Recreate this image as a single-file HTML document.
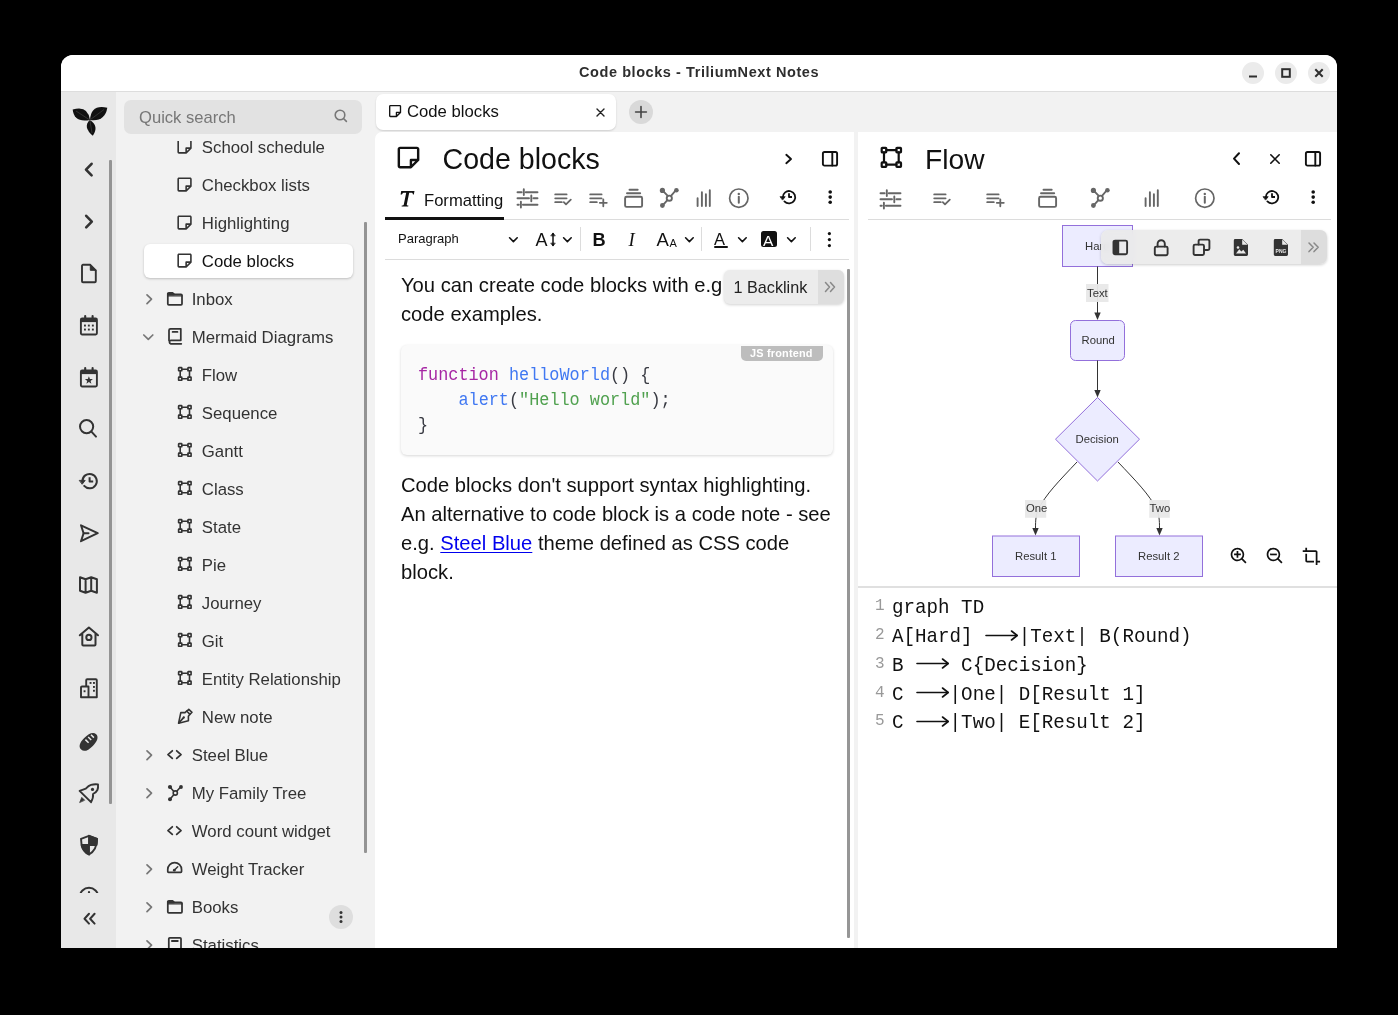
<!DOCTYPE html>
<html><head><meta charset="utf-8">
<style>
*{box-sizing:border-box;margin:0;padding:0}
html,body{width:1398px;height:1015px;background:#000;overflow:hidden;font-family:"Liberation Sans",sans-serif;color:#222}
.a{position:absolute;overflow:visible}
.b{position:absolute}
.tx{position:absolute;white-space:nowrap;line-height:1}
.row{position:absolute;white-space:nowrap;font-size:16.8px;color:#333;line-height:38px;height:38px}
.mono{font-family:"Liberation Mono",monospace}

</style></head><body>
<div id="root" style="position:absolute;left:0;top:0;width:1398px;height:1015px;will-change:transform">

<div class="b" style="left:61px;top:55px;width:1276px;height:893px;background:#f2f2f2;border-radius:12px 12px 0 0;overflow:hidden">
  <div class="b" style="left:0;top:0;width:1276px;height:36px;background:#fff"></div>
  <div class="b" style="left:0;top:36px;width:1276px;height:1px;background:#dddddd"></div>
  <div class="b" style="left:0;top:37px;width:55px;height:856px;background:#e8e8e8"></div>
</div>
<div class="tx" style="left:579px;top:65px;font-weight:bold;font-size:14.5px;letter-spacing:0.57px;color:#2e2e2e">Code blocks - TriliumNext Notes</div>
<div class="b" style="left:1242px;top:62px;width:22px;height:22px;border-radius:50%;background:#ebebeb"></div>
<div class="b" style="left:1275px;top:62px;width:22px;height:22px;border-radius:50%;background:#ebebeb"></div>
<div class="b" style="left:1308px;top:62px;width:22px;height:22px;border-radius:50%;background:#ebebeb"></div>
<svg class="a" style="left:1242px;top:62px" width="22" height="22" viewBox="0 0 22 22" stroke="#2e2e2e" stroke-width="2" fill="none"><path d="M7 14.5h8"/></svg>
<svg class="a" style="left:1275px;top:62px" width="22" height="22" viewBox="0 0 22 22" stroke="#2e2e2e" stroke-width="2" fill="none"><rect x="7.2" y="7.2" width="7.6" height="7.6"/></svg>
<svg class="a" style="left:1308px;top:62px" width="22" height="22" viewBox="0 0 22 22" stroke="#2e2e2e" stroke-width="2" fill="none"><path d="M7.3 7.3l7.4 7.4M14.7 7.3l-7.4 7.4"/></svg>
<svg class="a" style="left:70px;top:104px" width="40" height="35" viewBox="70 104 40 35"><g fill="#111">
<path d="M72.7 109.5 Q74 123 90 120 Q88 105 72.7 109.5Z"/>
<path d="M107.3 107.8 Q91 104 90 120 Q105 122 107.3 107.8Z"/>
<path d="M92.8 135.8 Q99.5 126 89.8 120 Q82.5 127 92.8 135.8Z"/>
</g><g stroke="#555" stroke-width="0.5" fill="none"><path d="M76 111 L89 119.5 M104 109.5 L90.5 119.5 M90 121 L92 133"/></g></svg>
<svg class="a" style="left:83px;top:162px" width="11" height="15" viewBox="0 0 11 15" fill="none" stroke="#333" stroke-width="2.6" stroke-linejoin="round" stroke-linecap="round" stroke-linecap="butt" stroke-linejoin="miter"><path d="M8.6 1.8 L3 7.6 L8.6 13.4"/></svg>
<svg class="a" style="left:84px;top:214px" width="11" height="15" viewBox="0 0 11 15" fill="none" stroke="#333" stroke-width="2.6" stroke-linejoin="round" stroke-linecap="round" stroke-linecap="butt" stroke-linejoin="miter"><path d="M2.2 1.8 L7.8 7.6 L2.2 13.4"/></svg>
<svg class="a" style="left:80px;top:263px" width="18" height="21" viewBox="0 0 18 21" fill="none" stroke="#333" stroke-width="1.9" stroke-linejoin="round" stroke-linecap="round" ><path d="M3 1.8 H10.3 L15.8 7.3 V18.3 a1 1 0 0 1 -1 1 H3 a1 1 0 0 1 -1 -1 V2.8 a1 1 0 0 1 1 -1 Z"/><path d="M10.3 1.8 V7.3 H15.8" fill="#333" stroke-width="1"/></svg>
<svg class="a" style="left:79px;top:315px" width="20" height="21" viewBox="0 0 20 21" fill="none" stroke="#333" stroke-width="1.9" stroke-linejoin="round" stroke-linecap="round" ><rect x="1.9" y="3.5" width="16" height="16" rx="1.2"/><rect x="1.9" y="3.5" width="16" height="3.6" fill="#333" stroke="none"/><path d="M6.2 1 V4 M13.6 1 V4" stroke-width="2.1"/><rect x="5" y="9.6" width="1.9" height="1.9" fill="#333" stroke="none"/><rect x="5" y="13.6" width="1.9" height="1.9" fill="#333" stroke="none"/><rect x="8.9" y="9.6" width="1.9" height="1.9" fill="#333" stroke="none"/><rect x="8.9" y="13.6" width="1.9" height="1.9" fill="#333" stroke="none"/><rect x="12.9" y="9.6" width="1.9" height="1.9" fill="#333" stroke="none"/><rect x="12.9" y="13.6" width="1.9" height="1.9" fill="#333" stroke="none"/></svg>
<svg class="a" style="left:79px;top:367px" width="20" height="21" viewBox="0 0 20 21" fill="none" stroke="#333" stroke-width="1.9" stroke-linejoin="round" stroke-linecap="round" ><rect x="1.9" y="3.5" width="16" height="16" rx="1.2"/><rect x="1.9" y="3.5" width="16" height="3.6" fill="#333" stroke="none"/><path d="M6.2 1 V4 M13.6 1 V4" stroke-width="2.1"/><path d="M9.9 9.2 L10.95 12 L13.9 12.1 L11.6 13.9 L12.4 16.7 L9.9 15.1 L7.4 16.7 L8.2 13.9 L5.9 12.1 L8.85 12 Z" fill="#333" stroke="none"/></svg>
<svg class="a" style="left:78px;top:418px" width="20" height="21" viewBox="0 0 20 21" fill="none" stroke="#333" stroke-width="2" stroke-linejoin="round" stroke-linecap="round" ><circle cx="8.6" cy="8.6" r="6.6"/><path d="M13.4 13.6 L18 18.6"/></svg>
<svg class="a" style="left:78px;top:471px" width="22" height="21" viewBox="0 0 22 21" fill="none" stroke="#333" stroke-width="2" stroke-linejoin="round" stroke-linecap="round" ><path d="M4.4 10.2 A7.2 7.2 0 1 1 6.2 14.9"/><path d="M1.6 9.4 L7.2 9.4 L4.4 13 Z" fill="#333" stroke-width="0.9"/><path d="M11.6 6.3 V10.6 H15.2" stroke-linecap="butt"/></svg>
<svg class="a" style="left:79px;top:523px" width="21" height="21" viewBox="0 0 21 21" fill="none" stroke="#333" stroke-width="2" stroke-linejoin="round" stroke-linecap="round" ><path d="M2 2.3 L18.7 10.2 L2 18.2 L4.6 10.2 Z"/><path d="M4.6 10.2 H9.5"/></svg>
<svg class="a" style="left:78px;top:575px" width="22" height="21" viewBox="0 0 22 21" fill="none" stroke="#333" stroke-width="2" stroke-linejoin="round" stroke-linecap="round" ><path d="M2 2.3 L7.6 4.3 L13.2 2.3 L18.9 4.3 V17.8 L13.2 15.8 L7.6 17.8 L2 15.8 Z M7.6 4.3 V17.8 M13.2 2.3 V15.8"/></svg>
<svg class="a" style="left:78px;top:625px" width="22" height="23" viewBox="0 0 22 23" fill="none" stroke="#333" stroke-width="2" stroke-linejoin="round" stroke-linecap="round" ><path d="M1.8 10.3 L10.9 2.5 L20 10.3 M4.3 8.5 V19.6 a1 1 0 0 0 1 1 H16.5 a1 1 0 0 0 1 -1 V8.5"/><circle cx="10.9" cy="12.4" r="2.6"/></svg>
<svg class="a" style="left:79px;top:677px" width="20" height="23" viewBox="0 0 20 23" fill="none" stroke="#333" stroke-width="1.9" stroke-linejoin="round" stroke-linecap="round" ><path d="M7.2 9.5 V3.2 a1 1 0 0 1 1 -1 H16.8 a1 1 0 0 1 1 1 V20.2 H2 V10.5 a1 1 0 0 1 1 -1 H9.5 V20.2"/><rect x="10.6" y="5" width="1.9" height="1.9" fill="#333" stroke="none"/><rect x="14" y="5" width="1.9" height="1.9" fill="#333" stroke="none"/><rect x="14" y="9" width="1.9" height="1.9" fill="#333" stroke="none"/><rect x="14" y="12.8" width="1.9" height="1.9" fill="#333" stroke="none"/><rect x="4.6" y="13.3" width="1.9" height="1.9" fill="#333" stroke="none"/></svg>
<svg class="a" style="left:77px;top:730px" width="23" height="23" viewBox="0 0 23 23" fill="none" stroke="#333" stroke-width="2" stroke-linejoin="round" stroke-linecap="round" ><path d="M4.2 19.6 C1.2 16.8 2.6 12.6 7.2 8 C11.8 3.4 16.2 1.6 19.2 4.2 C21.9 7 20.4 11.3 15.8 15.9 C11.2 20.5 7 22.3 4.2 19.6 Z" fill="#333" stroke="none"/><path d="M8.4 9.6 L11.6 12.8 M11.2 7 L14.2 10 M14 4.7 L16.9 7.6" stroke="#e8e8e8" stroke-width="1.5" stroke-linecap="butt"/></svg>
<svg class="a" style="left:78px;top:782px" width="22" height="22" viewBox="0 0 22 22" fill="none" stroke="#333" stroke-width="1.9" stroke-linejoin="round" stroke-linecap="round" ><path d="M1.6 8.8 L7.8 6.6 C9.5 4.7 11 3.3 13 2.8 C15.5 2.2 18 2.2 20 2.4 C20.2 4.4 20.2 6.4 19.4 8 C18.6 9.6 16.6 11.2 15 12 C15.4 14.6 14.8 17 13 20.2 Z"/><circle cx="14.5" cy="7.4" r="1.6" fill="#333" stroke="none"/><path d="M1.8 20.2 L3.8 15.4 L6.4 18 Z" fill="#333" stroke-width="0.8"/></svg>
<svg class="a" style="left:79px;top:834px" width="20" height="23" viewBox="0 0 20 23" fill="none" stroke="#333" stroke-width="1.9" stroke-linejoin="round" stroke-linecap="round" ><path d="M10 1.8 L18 4.8 C18 12.5 15.5 17.5 10 20.5 C4.5 17.5 2 12.5 2 4.8 Z"/><path d="M10 1.8 L18 4.8 C18 7.5 17.8 9.2 17.5 11 H10 Z M10 11 H2.5 C3.3 15.3 5.5 18.3 10 20.5 Z" fill="#333"/></svg>
<div class="b" style="left:70px;top:880px;width:40px;height:13px;overflow:hidden"><svg class="a" style="left:8px;top:5px" width="22" height="20" viewBox="0 0 22 20" fill="none" stroke="#333" stroke-width="2"><path d="M1.8 12 A9.2 9.2 0 0 1 20.2 12"/><circle cx="11" cy="7.2" r="1.1" fill="#333" stroke="none"/></svg></div>
<svg class="a" style="left:82px;top:911.6px" width="15" height="14" viewBox="0 0 15 14" fill="none" stroke="#333" stroke-width="2" stroke-linejoin="round" stroke-linecap="round" stroke-linecap="butt" stroke-linejoin="miter"><path d="M7 1.8 L2.5 6.7 L7 11.6 M12.6 1.8 L8.1 6.7 L12.6 11.6"/></svg>
<div class="b" style="left:109px;top:160px;width:3px;height:644px;background:#949494;border-radius:1px"></div><div class="b" style="left:116px;top:92px;width:259px;height:856px;background:#f2f2f2"></div>
<div class="b" style="left:124px;top:100px;width:238px;height:34px;border-radius:7px;background:#e2e2e2"></div>
<div class="tx" style="left:139px;top:110px;font-size:16.6px;color:#777">Quick search</div>
<svg class="a" style="left:333px;top:108px" width="16" height="16" viewBox="0 0 16 16" fill="none" stroke="#777" stroke-width="1.6" stroke-linejoin="round" stroke-linecap="round" ><circle cx="7" cy="7" r="4.8"/><path d="M10.5 10.5 L13.4 13.4"/></svg>
<div class="b" style="left:116px;top:141px;width:259px;height:807px;overflow:hidden">
<div class="row" style="left:85.80000000000001px;top:-11.7px;color:#333">School schedule</div>
<svg class="a" style="left:59.1px;top:-4.4px" width="19.1" height="19.1" viewBox="0 0 24 24" fill="#333"><path d="M19 3H5c-1.103 0-2 .897-2 2v14c0 1.103.897 2 2 2h9a1 1 0 0 0 .707-.293l6-6a1 1 0 0 0 .293-.707V5c0-1.103-.897-2-2-2zM5 5h14v8h-5a1 1 0 0 0-1 1v5H5V5zm10 12.586V15h2.586L15 17.586z"/></svg>
<div class="row" style="left:85.80000000000001px;top:26.3px;color:#333">Checkbox lists</div>
<svg class="a" style="left:59.1px;top:33.6px" width="19.1" height="19.1" viewBox="0 0 24 24" fill="#333"><path d="M19 3H5c-1.103 0-2 .897-2 2v14c0 1.103.897 2 2 2h9a1 1 0 0 0 .707-.293l6-6a1 1 0 0 0 .293-.707V5c0-1.103-.897-2-2-2zM5 5h14v8h-5a1 1 0 0 0-1 1v5H5V5zm10 12.586V15h2.586L15 17.586z"/></svg>
<div class="row" style="left:85.80000000000001px;top:64.3px;color:#333">Highlighting</div>
<svg class="a" style="left:59.1px;top:71.6px" width="19.1" height="19.1" viewBox="0 0 24 24" fill="#333"><path d="M19 3H5c-1.103 0-2 .897-2 2v14c0 1.103.897 2 2 2h9a1 1 0 0 0 .707-.293l6-6a1 1 0 0 0 .293-.707V5c0-1.103-.897-2-2-2zM5 5h14v8h-5a1 1 0 0 0-1 1v5H5V5zm10 12.586V15h2.586L15 17.586z"/></svg>
<div class="b" style="left:28px;top:103px;width:208.5px;height:34.2px;background:#fff;border-radius:6px;box-shadow:0 1px 2.5px rgba(0,0,0,.22)"></div>
<div class="row" style="left:85.80000000000001px;top:102.3px;color:#111">Code blocks</div>
<svg class="a" style="left:59.1px;top:109.6px" width="19.1" height="19.1" viewBox="0 0 24 24" fill="#333"><path d="M19 3H5c-1.103 0-2 .897-2 2v14c0 1.103.897 2 2 2h9a1 1 0 0 0 .707-.293l6-6a1 1 0 0 0 .293-.707V5c0-1.103-.897-2-2-2zM5 5h14v8h-5a1 1 0 0 0-1 1v5H5V5zm10 12.586V15h2.586L15 17.586z"/></svg>
<div class="row" style="left:75.69999999999999px;top:140.3px;color:#333">Inbox</div>
<svg class="a" style="left:49.7px;top:150px" width="18" height="16" viewBox="0 0 18 16" fill="none" stroke="#333" stroke-width="1.75" stroke-linejoin="round" stroke-linecap="round" ><path d="M1.8 12.8 V2.8 a1 1 0 0 1 1 -1 H6.6 L8.2 3.3 H15 a1 1 0 0 1 1 1 V12.8 a1 1 0 0 1 -1 1 H2.8 a1 1 0 0 1 -1 -1 Z"/><path d="M2.5 3.2 H7.4" stroke-width="2.4"/><path d="M1.8 4.8 H16" stroke-width="1.2"/></svg>
<svg class="a" style="left:28.69999999999999px;top:152.3px" width="9" height="13" viewBox="0 0 9 13" fill="none" stroke="#777" stroke-width="1.7" stroke-linejoin="round" stroke-linecap="round" stroke-linecap="butt" stroke-linejoin="miter"><path d="M2 1.8 L6.5 6.2 L2 10.6"/></svg>
<div class="row" style="left:75.69999999999999px;top:178.3px;color:#333">Mermaid Diagrams</div>
<svg class="a" style="left:50.6px;top:185.7px" width="17" height="18" viewBox="0 0 17 18" fill="none" stroke="#333" stroke-width="1.75" stroke-linejoin="round" stroke-linecap="round" ><path d="M2 13.6 V3.3 a1.5 1.5 0 0 1 1.5 -1.5 H13.8 V13.3 H3.8 a1.8 1.8 0 0 0 0 3.5 H14.3"/><path d="M5.6 4.9 H10.5" stroke-width="1.7"/></svg>
<svg class="a" style="left:25.599999999999994px;top:192.10000000000002px" width="13" height="9" viewBox="0 0 13 9" fill="none" stroke="#777" stroke-width="1.7" stroke-linejoin="round" stroke-linecap="round" stroke-linecap="butt" stroke-linejoin="miter"><path d="M1.8 2 L6.3 6.4 L10.8 2"/></svg>
<div class="row" style="left:85.80000000000001px;top:216.3px;color:#333">Flow</div>
<svg class="a" style="left:60.9px;top:225.3px" width="17" height="17" viewBox="0 0 17 17" fill="none" stroke="#333" stroke-width="1.6" stroke-linejoin="round" stroke-linecap="round" ><rect x="1.6" y="1.6" width="3.2" height="3.2" rx="0.4"/><rect x="1.6" y="11.1" width="3.2" height="3.2" rx="0.4"/><rect x="10.9" y="1.6" width="3.2" height="3.2" rx="0.4"/><rect x="10.9" y="11.1" width="3.2" height="3.2" rx="0.4"/><path d="M4.8 3.2 H10.9 M4.8 12.7 H10.9 M3.2 4.8 V11.1 M12.5 4.8 V11.1"/></svg>
<div class="row" style="left:85.80000000000001px;top:254.3px;color:#333">Sequence</div>
<svg class="a" style="left:60.9px;top:263.3px" width="17" height="17" viewBox="0 0 17 17" fill="none" stroke="#333" stroke-width="1.6" stroke-linejoin="round" stroke-linecap="round" ><rect x="1.6" y="1.6" width="3.2" height="3.2" rx="0.4"/><rect x="1.6" y="11.1" width="3.2" height="3.2" rx="0.4"/><rect x="10.9" y="1.6" width="3.2" height="3.2" rx="0.4"/><rect x="10.9" y="11.1" width="3.2" height="3.2" rx="0.4"/><path d="M4.8 3.2 H10.9 M4.8 12.7 H10.9 M3.2 4.8 V11.1 M12.5 4.8 V11.1"/></svg>
<div class="row" style="left:85.80000000000001px;top:292.3px;color:#333">Gantt</div>
<svg class="a" style="left:60.9px;top:301.3px" width="17" height="17" viewBox="0 0 17 17" fill="none" stroke="#333" stroke-width="1.6" stroke-linejoin="round" stroke-linecap="round" ><rect x="1.6" y="1.6" width="3.2" height="3.2" rx="0.4"/><rect x="1.6" y="11.1" width="3.2" height="3.2" rx="0.4"/><rect x="10.9" y="1.6" width="3.2" height="3.2" rx="0.4"/><rect x="10.9" y="11.1" width="3.2" height="3.2" rx="0.4"/><path d="M4.8 3.2 H10.9 M4.8 12.7 H10.9 M3.2 4.8 V11.1 M12.5 4.8 V11.1"/></svg>
<div class="row" style="left:85.80000000000001px;top:330.3px;color:#333">Class</div>
<svg class="a" style="left:60.9px;top:339.3px" width="17" height="17" viewBox="0 0 17 17" fill="none" stroke="#333" stroke-width="1.6" stroke-linejoin="round" stroke-linecap="round" ><rect x="1.6" y="1.6" width="3.2" height="3.2" rx="0.4"/><rect x="1.6" y="11.1" width="3.2" height="3.2" rx="0.4"/><rect x="10.9" y="1.6" width="3.2" height="3.2" rx="0.4"/><rect x="10.9" y="11.1" width="3.2" height="3.2" rx="0.4"/><path d="M4.8 3.2 H10.9 M4.8 12.7 H10.9 M3.2 4.8 V11.1 M12.5 4.8 V11.1"/></svg>
<div class="row" style="left:85.80000000000001px;top:368.3px;color:#333">State</div>
<svg class="a" style="left:60.9px;top:377.3px" width="17" height="17" viewBox="0 0 17 17" fill="none" stroke="#333" stroke-width="1.6" stroke-linejoin="round" stroke-linecap="round" ><rect x="1.6" y="1.6" width="3.2" height="3.2" rx="0.4"/><rect x="1.6" y="11.1" width="3.2" height="3.2" rx="0.4"/><rect x="10.9" y="1.6" width="3.2" height="3.2" rx="0.4"/><rect x="10.9" y="11.1" width="3.2" height="3.2" rx="0.4"/><path d="M4.8 3.2 H10.9 M4.8 12.7 H10.9 M3.2 4.8 V11.1 M12.5 4.8 V11.1"/></svg>
<div class="row" style="left:85.80000000000001px;top:406.3px;color:#333">Pie</div>
<svg class="a" style="left:60.9px;top:415.3px" width="17" height="17" viewBox="0 0 17 17" fill="none" stroke="#333" stroke-width="1.6" stroke-linejoin="round" stroke-linecap="round" ><rect x="1.6" y="1.6" width="3.2" height="3.2" rx="0.4"/><rect x="1.6" y="11.1" width="3.2" height="3.2" rx="0.4"/><rect x="10.9" y="1.6" width="3.2" height="3.2" rx="0.4"/><rect x="10.9" y="11.1" width="3.2" height="3.2" rx="0.4"/><path d="M4.8 3.2 H10.9 M4.8 12.7 H10.9 M3.2 4.8 V11.1 M12.5 4.8 V11.1"/></svg>
<div class="row" style="left:85.80000000000001px;top:444.3px;color:#333">Journey</div>
<svg class="a" style="left:60.9px;top:453.3px" width="17" height="17" viewBox="0 0 17 17" fill="none" stroke="#333" stroke-width="1.6" stroke-linejoin="round" stroke-linecap="round" ><rect x="1.6" y="1.6" width="3.2" height="3.2" rx="0.4"/><rect x="1.6" y="11.1" width="3.2" height="3.2" rx="0.4"/><rect x="10.9" y="1.6" width="3.2" height="3.2" rx="0.4"/><rect x="10.9" y="11.1" width="3.2" height="3.2" rx="0.4"/><path d="M4.8 3.2 H10.9 M4.8 12.7 H10.9 M3.2 4.8 V11.1 M12.5 4.8 V11.1"/></svg>
<div class="row" style="left:85.80000000000001px;top:482.3px;color:#333">Git</div>
<svg class="a" style="left:60.9px;top:491.3px" width="17" height="17" viewBox="0 0 17 17" fill="none" stroke="#333" stroke-width="1.6" stroke-linejoin="round" stroke-linecap="round" ><rect x="1.6" y="1.6" width="3.2" height="3.2" rx="0.4"/><rect x="1.6" y="11.1" width="3.2" height="3.2" rx="0.4"/><rect x="10.9" y="1.6" width="3.2" height="3.2" rx="0.4"/><rect x="10.9" y="11.1" width="3.2" height="3.2" rx="0.4"/><path d="M4.8 3.2 H10.9 M4.8 12.7 H10.9 M3.2 4.8 V11.1 M12.5 4.8 V11.1"/></svg>
<div class="row" style="left:85.80000000000001px;top:520.3px;color:#333">Entity Relationship</div>
<svg class="a" style="left:60.9px;top:529.3px" width="17" height="17" viewBox="0 0 17 17" fill="none" stroke="#333" stroke-width="1.6" stroke-linejoin="round" stroke-linecap="round" ><rect x="1.6" y="1.6" width="3.2" height="3.2" rx="0.4"/><rect x="1.6" y="11.1" width="3.2" height="3.2" rx="0.4"/><rect x="10.9" y="1.6" width="3.2" height="3.2" rx="0.4"/><rect x="10.9" y="11.1" width="3.2" height="3.2" rx="0.4"/><path d="M4.8 3.2 H10.9 M4.8 12.7 H10.9 M3.2 4.8 V11.1 M12.5 4.8 V11.1"/></svg>
<div class="row" style="left:85.80000000000001px;top:558.3px;color:#333">New note</div>
<svg class="a" style="left:59.6px;top:565.8px" width="18" height="18" viewBox="0 0 18 18" fill="none" stroke="#333" stroke-width="1.6" stroke-linejoin="round" stroke-linecap="round" ><path d="M2.6 16.2 L4.8 5.6 H9 L11.2 3.6 M13.6 7.6 L12.4 9.3 V13.7 L2.6 16.2"/><path d="M11 4.3 L12.8 2.4 L16 5.3 L13.9 7.4 Z"/><path d="M2.8 16 L7.6 10.6" stroke-width="1.7"/><circle cx="7.8" cy="10.4" r="1.1" fill="#333" stroke="none"/></svg>
<div class="row" style="left:75.69999999999999px;top:596.3px;color:#333">Steel Blue</div>
<svg class="a" style="left:50px;top:608px" width="17" height="12" viewBox="0 0 17 12" fill="none" stroke="#333" stroke-width="1.8" stroke-linejoin="round" stroke-linecap="round" stroke-linecap="butt"><path d="M6.3 1.8 L2 5.6 L6.3 9.4 M10.7 1.8 L15 5.6 L10.7 9.4"/></svg>
<svg class="a" style="left:28.69999999999999px;top:608.3px" width="9" height="13" viewBox="0 0 9 13" fill="none" stroke="#777" stroke-width="1.7" stroke-linejoin="round" stroke-linecap="round" stroke-linecap="butt" stroke-linejoin="miter"><path d="M2 1.8 L6.5 6.2 L2 10.6"/></svg>
<div class="row" style="left:75.69999999999999px;top:634.3px;color:#333">My Family Tree</div>
<svg class="a" style="left:50.6px;top:643px" width="17" height="18" viewBox="0 0 17 18" fill="none" stroke="#333" stroke-width="2" stroke-linejoin="round" stroke-linecap="round" ><path d="M3 3 L7.5 8.2 M13.8 2.8 L9.3 7.8 M3 15.2 L7.2 10.2" stroke-width="1.6"/><circle cx="8.3" cy="9" r="2.1" stroke-width="1.6" fill="#f2f2f2"/><circle cx="3" cy="3" r="2.1" fill="#333" stroke="none"/><circle cx="14" cy="3" r="1.9" fill="#333" stroke="none"/><circle cx="3" cy="15.3" r="2" fill="#333" stroke="none"/></svg>
<svg class="a" style="left:28.69999999999999px;top:646.3px" width="9" height="13" viewBox="0 0 9 13" fill="none" stroke="#777" stroke-width="1.7" stroke-linejoin="round" stroke-linecap="round" stroke-linecap="butt" stroke-linejoin="miter"><path d="M2 1.8 L6.5 6.2 L2 10.6"/></svg>
<div class="row" style="left:75.80000000000001px;top:672.3px;color:#333">Word count widget</div>
<svg class="a" style="left:50px;top:684px" width="17" height="12" viewBox="0 0 17 12" fill="none" stroke="#333" stroke-width="1.8" stroke-linejoin="round" stroke-linecap="round" stroke-linecap="butt"><path d="M6.3 1.8 L2 5.6 L6.3 9.4 M10.7 1.8 L15 5.6 L10.7 9.4"/></svg>
<div class="row" style="left:75.69999999999999px;top:710.3px;color:#333">Weight Tracker</div>
<svg class="a" style="left:50px;top:720.2px" width="18" height="14" viewBox="0 0 18 14" fill="none" stroke="#333" stroke-width="1.7" stroke-linejoin="round" stroke-linecap="round" ><path d="M1.75 10.6 V8.45 A6.9 6.9 0 0 1 15.55 8.45 V10.6 a.8 .8 0 0 1 -.8 .8 H2.55 a.8 .8 0 0 1 -.8 -.8 Z"/><path d="M8.3 9.2 L11.7 5.8" stroke-width="1.5"/><circle cx="8.3" cy="9.2" r="1.35" fill="#333" stroke="none"/></svg>
<svg class="a" style="left:28.69999999999999px;top:722.3px" width="9" height="13" viewBox="0 0 9 13" fill="none" stroke="#777" stroke-width="1.7" stroke-linejoin="round" stroke-linecap="round" stroke-linecap="butt" stroke-linejoin="miter"><path d="M2 1.8 L6.5 6.2 L2 10.6"/></svg>
<div class="row" style="left:75.69999999999999px;top:748.3px;color:#333">Books</div>
<svg class="a" style="left:49.7px;top:758px" width="18" height="16" viewBox="0 0 18 16" fill="none" stroke="#333" stroke-width="1.75" stroke-linejoin="round" stroke-linecap="round" ><path d="M1.8 12.8 V2.8 a1 1 0 0 1 1 -1 H6.6 L8.2 3.3 H15 a1 1 0 0 1 1 1 V12.8 a1 1 0 0 1 -1 1 H2.8 a1 1 0 0 1 -1 -1 Z"/><path d="M2.5 3.2 H7.4" stroke-width="2.4"/><path d="M1.8 4.8 H16" stroke-width="1.2"/></svg>
<svg class="a" style="left:28.69999999999999px;top:760.3px" width="9" height="13" viewBox="0 0 9 13" fill="none" stroke="#777" stroke-width="1.7" stroke-linejoin="round" stroke-linecap="round" stroke-linecap="butt" stroke-linejoin="miter"><path d="M2 1.8 L6.5 6.2 L2 10.6"/></svg>
<div class="row" style="left:75.69999999999999px;top:786.3px;color:#333">Statistics</div>
<svg class="a" style="left:50.5px;top:795px" width="16" height="18" viewBox="0 0 16 18" fill="none" stroke="#333" stroke-width="1.75" stroke-linejoin="round" stroke-linecap="round" ><rect x="1.8" y="1.8" width="12.2" height="15" rx="1"/><path d="M4.9 5 H10.8" stroke-width="1.8"/></svg>
<svg class="a" style="left:28.69999999999999px;top:798.3px" width="9" height="13" viewBox="0 0 9 13" fill="none" stroke="#777" stroke-width="1.7" stroke-linejoin="round" stroke-linecap="round" stroke-linecap="butt" stroke-linejoin="miter"><path d="M2 1.8 L6.5 6.2 L2 10.6"/></svg>
</div>
<div class="b" style="left:364px;top:222px;width:3px;height:631px;background:#949494;border-radius:1px"></div>
<div class="b" style="left:329px;top:905px;width:24px;height:24px;border-radius:50%;background:#dedede"></div>
<svg class="a" style="left:329px;top:905px" width="24" height="24" viewBox="0 0 24 24" fill="#333"><circle cx="12" cy="7.5" r="1.5"/><circle cx="12" cy="12" r="1.5"/><circle cx="12" cy="16.5" r="1.5"/></svg><div class="b" style="left:376px;top:94px;width:240px;height:36px;background:#fff;border-radius:7px;box-shadow:0 1px 2px rgba(0,0,0,.15)"></div>
<svg class="a" style="left:386.6px;top:103px" width="16.2" height="16.2" viewBox="0 0 24 24" fill="#111"><path d="M19 3H5c-1.103 0-2 .897-2 2v14c0 1.103.897 2 2 2h9a1 1 0 0 0 .707-.293l6-6a1 1 0 0 0 .293-.707V5c0-1.103-.897-2-2-2zM5 5h14v8h-5a1 1 0 0 0-1 1v5H5V5zm10 12.586V15h2.586L15 17.586z"/></svg>
<div class="tx" style="left:407px;top:104.4px;font-size:16.7px;color:#111">Code blocks</div>
<svg class="a" style="left:596px;top:108px" width="9" height="9" viewBox="0 0 9 9" fill="none" stroke="#222" stroke-width="1.4" stroke-linejoin="round" stroke-linecap="round" ><path d="M1 1 L8 8 M8 1 L1 8"/></svg>
<div class="b" style="left:629px;top:100px;width:24px;height:24px;border-radius:50%;background:#d9d9d9"></div>
<svg class="a" style="left:629px;top:100px" width="24" height="24" viewBox="0 0 24 24" fill="none" stroke="#444" stroke-width="1.6" stroke-linejoin="round" stroke-linecap="round" stroke-linecap="butt"><path d="M12 6.6 V17.4 M6.6 12 H17.4"/></svg>
<div class="b" style="left:375px;top:132px;width:479px;height:816px;background:#fff;border-radius:7px 0 0 0"></div>
<div class="b" style="left:858px;top:132px;width:479px;height:816px;background:#fff"></div><svg class="a" style="left:394.2px;top:142.6px" width="29" height="29" viewBox="0 0 24 24" fill="#111"><path d="M19 3H5c-1.103 0-2 .897-2 2v14c0 1.103.897 2 2 2h9a1 1 0 0 0 .707-.293l6-6a1 1 0 0 0 .293-.707V5c0-1.103-.897-2-2-2zM5 5h14v8h-5a1 1 0 0 0-1 1v5H5V5zm10 12.586V15h2.586L15 17.586z"/></svg>
<div class="tx" style="left:442.5px;top:144.5px;font-size:28.6px;color:#111">Code blocks</div>
<svg class="a" style="left:783px;top:152px" width="12" height="14" viewBox="0 0 12 14" fill="none" stroke="#111" stroke-width="1.9" stroke-linejoin="round" stroke-linecap="round" stroke-linecap="butt" stroke-linejoin="miter"><path d="M3.3 2.8 L8 7 L3.3 11.2"/></svg>
<svg class="a" style="left:821px;top:150px" width="18" height="18" viewBox="0 0 18 18" fill="none" stroke="#111" stroke-width="1.9" stroke-linejoin="round" stroke-linecap="round" ><rect x="1.9" y="2" width="14.2" height="13.6" rx="1.6"/><path d="M11.3 2 V15.6"/></svg>
<svg class="a" style="left:398px;top:189px" width="18" height="19" viewBox="0 0 18 19" fill="none" stroke="#333" stroke-width="2" stroke-linejoin="round" stroke-linecap="round" ><path d="M3.2 2 H16.5 L15.8 5.6 H15 C14.8 4 14.3 3.7 12.7 3.7 H11.2 L8.8 15.5 C8.7 16.3 9 16.5 10.4 16.6 L10.2 17.5 H3.6 L3.8 16.6 C5.2 16.5 5.6 16.2 5.8 15.5 L8.2 3.7 H6.8 C5.2 3.7 4.5 4 3.9 5.6 H2.6 Z" fill="#111" stroke="none"/></svg>
<div class="tx" style="left:424px;top:192.7px;font-size:16.6px;color:#111">Formatting</div>
<div class="b" style="left:385px;top:219px;width:464px;height:1px;background:#dcdcdc"></div>
<div class="b" style="left:385px;top:217px;width:119px;height:3px;background:#111"></div>
<svg class="a" style="left:516px;top:188px" width="23" height="21" viewBox="0 0 23 21" fill="none" stroke="#666" stroke-width="1.9" stroke-linejoin="round" stroke-linecap="round" stroke-linecap="butt"><path d="M1.5 4.2 H5.6 M9.8 4.2 H21.5 M7.8 1.3 V7 M1.5 10.3 H13 M17.5 10.3 H21.5 M15.3 7.5 V13.2 M1.5 16.7 H2.8 M6.9 16.7 H21.5 M4.9 13.8 V19.6"/></svg>
<svg class="a" style="left:554px;top:192px" width="19" height="15" viewBox="0 0 19 15" fill="none" stroke="#666" stroke-width="1.8" stroke-linejoin="round" stroke-linecap="round" stroke-linecap="butt"><path d="M1.2 2.4 H12.6 M1.2 6.3 H12.6 M1.2 10.2 H7.8"/><path d="M9.8 10.2 L12 12.4 L16.8 7.6" stroke-linecap="round"/></svg>
<svg class="a" style="left:589px;top:192px" width="20" height="16" viewBox="0 0 20 16" fill="none" stroke="#666" stroke-width="1.8" stroke-linejoin="round" stroke-linecap="round" stroke-linecap="butt"><path d="M1.2 2.4 H12.6 M1.2 6.3 H12.6 M1.2 10.2 H7.8 M14.3 7.3 V14.3 M10.8 10.8 H17.8"/></svg>
<svg class="a" style="left:623px;top:188px" width="21" height="21" viewBox="0 0 21 21" fill="none" stroke="#666" stroke-width="1.9" stroke-linejoin="round" stroke-linecap="round" stroke-linecap="butt"><path d="M6.5 1.8 H14.7 M4 5.2 H17.2"/><rect x="2.1" y="8.8" width="17" height="10.1" rx="1.4"/></svg>
<svg class="a" style="left:659px;top:187px" width="21" height="22" viewBox="0 0 21 22" fill="none" stroke="#666" stroke-width="1.9" stroke-linejoin="round" stroke-linecap="round" ><path d="M3.2 3.2 L9.5 9.6 M17 3 L11.4 9.6 M3.5 18.6 L8.8 12.7"/><circle cx="10.3" cy="11.2" r="2.6" fill="#fff"/><circle cx="3.4" cy="3.4" r="2.6" fill="#666" stroke="none"/><circle cx="17.4" cy="3.3" r="2.3" fill="#666" stroke="none"/><circle cx="3.4" cy="18.5" r="2.4" fill="#666" stroke="none"/></svg>
<svg class="a" style="left:695px;top:189px" width="18" height="19" viewBox="0 0 18 19" fill="none" stroke="#666" stroke-width="1.9" stroke-linejoin="round" stroke-linecap="round" stroke-linecap="butt"><path d="M2.6 9.2 V17 M6.9 3.2 V17 M10.9 5.3 V17 M14.8 1.3 V17"/></svg>
<svg class="a" style="left:728px;top:187px" width="22" height="23" viewBox="0 0 22 23" fill="none" stroke="#666" stroke-width="1.7" stroke-linejoin="round" stroke-linecap="round" stroke-linecap="butt"><circle cx="10.8" cy="11.2" r="9.2"/><path d="M10.8 9.8 V15.8" stroke-width="2"/><circle cx="10.8" cy="6.9" r="1.2" fill="#666" stroke="none"/></svg>
<svg class="a" style="left:779px;top:188px" width="20" height="18" viewBox="0 0 20 18" fill="none" stroke="#111" stroke-width="1.8" stroke-linejoin="round" stroke-linecap="round" ><path d="M3.8 9.4 A6.2 6.2 0 1 1 5.4 13.4"/><path d="M1.4 8.7 L6.2 8.7 L3.8 11.8 Z" fill="#111" stroke-width="0.8"/><path d="M10 5.2 V9 H13" stroke-linecap="butt"/></svg>
<svg class="a" style="left:826px;top:189px" width="8" height="17" viewBox="0 0 8 17" fill="#111" stroke="none" stroke-width="0" stroke-linejoin="round" stroke-linecap="round" ><circle cx="4.2" cy="3" r="1.8"/><circle cx="4.2" cy="8.1" r="1.8"/><circle cx="4.2" cy="13.2" r="1.8"/></svg>
<div class="tx" style="left:398px;top:232px;font-size:13px;color:#111">Paragraph</div>
<svg class="a" style="left:508px;top:236px" width="11" height="8" viewBox="0 0 11 8" fill="none" stroke="#111" stroke-width="1.6" stroke-linejoin="round" stroke-linecap="round" stroke-linecap="butt" stroke-linejoin="miter"><path d="M1.6 1.8 L5.4 5.6 L9.2 1.8"/></svg>
<div class="tx" style="left:535.5px;top:230.5px;font-size:18px;color:#111">A</div>
<svg class="a" style="left:549px;top:231px" width="8" height="17" viewBox="0 0 8 17" fill="none" stroke="#111" stroke-width="2" stroke-linejoin="round" stroke-linecap="round" ><path d="M4 2.4 V14.6" stroke-width="1.5"/><path d="M1.9 4.6 L4 2 L6.1 4.6 Z M1.9 12.4 L4 15 L6.1 12.4 Z" fill="#111" stroke-width="0.6"/></svg>
<svg class="a" style="left:562px;top:236px" width="11" height="8" viewBox="0 0 11 8" fill="none" stroke="#111" stroke-width="1.6" stroke-linejoin="round" stroke-linecap="round" stroke-linecap="butt" stroke-linejoin="miter"><path d="M1.6 1.8 L5.4 5.6 L9.2 1.8"/></svg>
<div class="b" style="left:580px;top:227px;width:1px;height:24px;background:#dcdcdc"></div>
<div class="tx" style="left:592.5px;top:231px;font-size:18.2px;font-weight:bold;color:#111">B</div>
<div class="tx" style="left:628.5px;top:231px;font-size:18.6px;font-style:italic;font-family:'Liberation Serif',serif;color:#111">I</div>
<div class="tx" style="left:656.5px;top:231px;font-size:18.5px;color:#111">A</div>
<div class="tx" style="left:669.5px;top:238px;font-size:11px;color:#111">A</div>
<svg class="a" style="left:684px;top:236px" width="11" height="8" viewBox="0 0 11 8" fill="none" stroke="#111" stroke-width="1.6" stroke-linejoin="round" stroke-linecap="round" stroke-linecap="butt" stroke-linejoin="miter"><path d="M1.6 1.8 L5.4 5.6 L9.2 1.8"/></svg>
<div class="b" style="left:701px;top:227px;width:1px;height:24px;background:#dcdcdc"></div>
<div class="tx" style="left:714px;top:231px;font-size:16.5px;color:#111">A</div>
<div class="b" style="left:714px;top:245.5px;width:14px;height:2px;background:#111;border-radius:1px"></div>
<svg class="a" style="left:737px;top:236px" width="11" height="8" viewBox="0 0 11 8" fill="none" stroke="#111" stroke-width="1.6" stroke-linejoin="round" stroke-linecap="round" stroke-linecap="butt" stroke-linejoin="miter"><path d="M1.6 1.8 L5.4 5.6 L9.2 1.8"/></svg>
<div class="b" style="left:761px;top:231px;width:16px;height:16px;background:#111;border-radius:2.5px"></div>
<div class="tx" style="left:763px;top:232.5px;font-size:15.5px;color:#fff">A</div>
<svg class="a" style="left:786px;top:236px" width="11" height="8" viewBox="0 0 11 8" fill="none" stroke="#111" stroke-width="1.6" stroke-linejoin="round" stroke-linecap="round" stroke-linecap="butt" stroke-linejoin="miter"><path d="M1.6 1.8 L5.4 5.6 L9.2 1.8"/></svg>
<div class="b" style="left:810px;top:227px;width:1px;height:24px;background:#dcdcdc"></div>
<svg class="a" style="left:825px;top:230px" width="8" height="19" viewBox="0 0 8 19" fill="#111" stroke="none" stroke-width="0" stroke-linejoin="round" stroke-linecap="round" ><circle cx="4.4" cy="3.6" r="1.6"/><circle cx="4.4" cy="9.6" r="1.6"/><circle cx="4.4" cy="15.6" r="1.6"/></svg>
<div class="b" style="left:385px;top:259px;width:464px;height:1px;background:#dcdcdc"></div>
<div class="b" style="left:401px;top:271px;width:440px;font-size:20.2px;color:#111;line-height:29px;white-space:nowrap">You can create code blocks with e.g<br>code examples.</div>
<div class="b" style="left:401px;top:345px;width:432px;height:110px;background:#fafafa;border-radius:6px;box-shadow:0 1px 3px rgba(0,0,0,.16)"></div>
<div class="b" style="left:741px;top:346px;width:82px;height:15px;background:#bdbdbd;border-radius:0 0 5px 5px"></div>
<div class="tx" style="left:750px;top:348px;font-size:10.9px;font-weight:bold;color:#fff;letter-spacing:0.2px">JS frontend</div>
<div class="b" style="left:417.8px;top:362.6px;font-family:'Liberation Mono',monospace;font-size:18.3px;line-height:25.3px;color:#383a42;white-space:pre;transform:scaleX(0.921);transform-origin:0 0"><span style="color:#a626a4">function</span> <span style="color:#4078f2">helloWorld</span>() {
    <span style="color:#4078f2">alert</span>(<span style="color:#50a14f">"Hello world"</span>);
}</div>
<div class="b" style="left:401px;top:471px;width:440px;font-size:20.2px;color:#111;line-height:29px;white-space:nowrap">Code blocks don't support syntax highlighting.<br>An alternative to code block is a code note - see<br>e.g. <span style="color:#0000ee;text-decoration:underline;text-decoration-thickness:1px;text-underline-offset:2px">Steel Blue</span> theme defined as CSS code<br>block.</div>
<div class="b" style="left:724px;top:270px;width:120px;height:34px;background:#ececec;border-radius:6px;box-shadow:0 1px 3px rgba(0,0,0,.18);overflow:hidden"><div class="b" style="left:94px;top:0;width:26px;height:34px;background:#dedede"></div></div>
<div class="tx" style="left:733.5px;top:279px;font-size:16.2px;color:#222">1 Backlink</div>
<svg class="a" style="left:823px;top:280px" width="14" height="14" viewBox="0 0 14 14" fill="none" stroke="#888" stroke-width="1.5" stroke-linejoin="round" stroke-linecap="round" stroke-linecap="butt" stroke-linejoin="miter"><path d="M2.5 2.5 L6.5 7 L2.5 11.5 M7.5 2.5 L11.5 7 L7.5 11.5"/></svg>
<div class="b" style="left:847px;top:269px;width:3px;height:669px;background:#969696;border-radius:1px"></div><svg class="a" style="left:879px;top:145px" width="25" height="25" viewBox="0 0 25 25" fill="none" stroke="#111" stroke-width="2.2" stroke-linejoin="round" stroke-linecap="round" ><rect x="2.7" y="2.8" width="4.6" height="4.6" rx="0.6"/><rect x="2.7" y="17.3" width="4.6" height="4.6" rx="0.6"/><rect x="17.4" y="2.8" width="4.6" height="4.6" rx="0.6"/><rect x="17.4" y="17.3" width="4.6" height="4.6" rx="0.6"/><path d="M7.3 5.1 H17.4 M7.3 19.6 H17.4 M5 7.4 V17.3 M19.7 7.4 V17.3"/></svg>
<div class="tx" style="left:925px;top:145px;font-size:28.2px;color:#111">Flow</div>
<svg class="a" style="left:1231px;top:151px" width="11" height="15" viewBox="0 0 11 15" fill="none" stroke="#111" stroke-width="2" stroke-linejoin="round" stroke-linecap="round" stroke-linecap="butt" stroke-linejoin="miter"><path d="M8 2.2 L3 7.6 L8 13"/></svg>
<svg class="a" style="left:1268px;top:152px" width="14" height="14" viewBox="0 0 14 14" fill="none" stroke="#111" stroke-width="1.6" stroke-linejoin="round" stroke-linecap="round" stroke-linecap="butt"><path d="M2.8 2.8 L11.2 11.2 M11.2 2.8 L2.8 11.2"/></svg>
<svg class="a" style="left:1304px;top:150px" width="18" height="18" viewBox="0 0 18 18" fill="none" stroke="#111" stroke-width="1.9" stroke-linejoin="round" stroke-linecap="round" ><rect x="1.9" y="2" width="14.2" height="13.6" rx="1.6"/><path d="M11.3 2 V15.6"/></svg>
<svg class="a" style="left:879.2px;top:188.5px" width="23" height="21" viewBox="0 0 23 21" fill="none" stroke="#666" stroke-width="1.9" stroke-linejoin="round" stroke-linecap="round" stroke-linecap="butt"><path d="M1.5 4.2 H5.6 M9.8 4.2 H21.5 M7.8 1.3 V7 M1.5 10.3 H13 M17.5 10.3 H21.5 M15.3 7.5 V13.2 M1.5 16.7 H2.8 M6.9 16.7 H21.5 M4.9 13.8 V19.6"/></svg>
<svg class="a" style="left:933px;top:192px" width="19" height="15" viewBox="0 0 19 15" fill="none" stroke="#666" stroke-width="1.8" stroke-linejoin="round" stroke-linecap="round" stroke-linecap="butt"><path d="M1.2 2.4 H12.6 M1.2 6.3 H12.6 M1.2 10.2 H7.8"/><path d="M9.8 10.2 L12 12.4 L16.8 7.6" stroke-linecap="round"/></svg>
<svg class="a" style="left:986.4px;top:192px" width="20" height="16" viewBox="0 0 20 16" fill="none" stroke="#666" stroke-width="1.8" stroke-linejoin="round" stroke-linecap="round" stroke-linecap="butt"><path d="M1.2 2.4 H12.6 M1.2 6.3 H12.6 M1.2 10.2 H7.8 M14.3 7.3 V14.3 M10.8 10.8 H17.8"/></svg>
<svg class="a" style="left:1037px;top:188px" width="21" height="21" viewBox="0 0 21 21" fill="none" stroke="#666" stroke-width="1.9" stroke-linejoin="round" stroke-linecap="round" stroke-linecap="butt"><path d="M6.5 1.8 H14.7 M4 5.2 H17.2"/><rect x="2.1" y="8.8" width="17" height="10.1" rx="1.4"/></svg>
<svg class="a" style="left:1090px;top:187px" width="21" height="22" viewBox="0 0 21 22" fill="none" stroke="#666" stroke-width="1.9" stroke-linejoin="round" stroke-linecap="round" ><path d="M3.2 3.2 L9.5 9.6 M17 3 L11.4 9.6 M3.5 18.6 L8.8 12.7"/><circle cx="10.3" cy="11.2" r="2.6" fill="#fff"/><circle cx="3.4" cy="3.4" r="2.6" fill="#666" stroke="none"/><circle cx="17.4" cy="3.3" r="2.3" fill="#666" stroke="none"/><circle cx="3.4" cy="18.5" r="2.4" fill="#666" stroke="none"/></svg>
<svg class="a" style="left:1143px;top:189px" width="18" height="19" viewBox="0 0 18 19" fill="none" stroke="#666" stroke-width="1.9" stroke-linejoin="round" stroke-linecap="round" stroke-linecap="butt"><path d="M2.6 9.2 V17 M6.9 3.2 V17 M10.9 5.3 V17 M14.8 1.3 V17"/></svg>
<svg class="a" style="left:1194px;top:187px" width="22" height="23" viewBox="0 0 22 23" fill="none" stroke="#666" stroke-width="1.7" stroke-linejoin="round" stroke-linecap="round" stroke-linecap="butt"><circle cx="10.8" cy="11.2" r="9.2"/><path d="M10.8 9.8 V15.8" stroke-width="2"/><circle cx="10.8" cy="6.9" r="1.2" fill="#666" stroke="none"/></svg>
<svg class="a" style="left:1262px;top:188px" width="20" height="18" viewBox="0 0 20 18" fill="none" stroke="#111" stroke-width="1.8" stroke-linejoin="round" stroke-linecap="round" ><path d="M3.8 9.4 A6.2 6.2 0 1 1 5.4 13.4"/><path d="M1.4 8.7 L6.2 8.7 L3.8 11.8 Z" fill="#111" stroke-width="0.8"/><path d="M10 5.2 V9 H13" stroke-linecap="butt"/></svg>
<svg class="a" style="left:1309px;top:189px" width="8" height="17" viewBox="0 0 8 17" fill="#111" stroke="none" stroke-width="0" stroke-linejoin="round" stroke-linecap="round" ><circle cx="4.2" cy="3" r="1.8"/><circle cx="4.2" cy="8.1" r="1.8"/><circle cx="4.2" cy="13.2" r="1.8"/></svg>
<div class="b" style="left:868px;top:219px;width:463px;height:1px;background:#dcdcdc"></div>
<svg class="a" style="left:858px;top:220px" width="479" height="366" viewBox="858 220 479 366">
<g fill="#ECECFF" stroke="#9370DB" stroke-width="1">
<rect x="1062.5" y="225.5" width="70" height="41"/>
<rect x="1070.5" y="320.5" width="54" height="40" rx="5"/>
<path d="M1097.5 397.5 L1139.5 439.2 L1097.5 481 L1055.5 439.2 Z"/>
<rect x="992.5" y="536" width="87" height="40.5"/>
<rect x="1115.5" y="536" width="87" height="40.5"/>
</g>
<g stroke="#333" stroke-width="1" fill="none">
<path d="M1097.5 266.5 V313"/>
<path d="M1097.5 360.5 V390"/>
<path d="M1077 462 C1060 480 1045 495 1038 510 C1036 515 1035.5 520 1035.5 528"/>
<path d="M1118 462 C1135 480 1150 495 1157 510 C1159 515 1159.5 520 1159.5 528"/>
</g>
<g fill="#333">
<path d="M1094.3 312.5 L1100.7 312.5 L1097.5 320 Z"/>
<path d="M1094.3 390 L1100.7 390 L1097.5 397.5 Z"/>
<path d="M1032.3 528 L1038.7 528 L1035.5 535.5 Z"/>
<path d="M1156.3 528 L1162.7 528 L1159.5 535.5 Z"/>
</g>
<g fill="#e8e8e8" fill-opacity="0.95">
<rect x="1086" y="284" width="22.5" height="18"/>
<rect x="1025" y="500" width="21.2" height="17.8"/>
<rect x="1149.2" y="500" width="20.6" height="17.8"/>
</g>
</svg>
<div class="tx" style="left:1085px;top:241px;font-size:11.3px;color:#333">Hard</div>
<div class="tx" style="left:1087px;top:288px;font-size:11.3px;color:#333">Text</div>
<div class="tx" style="left:1081.5px;top:335px;font-size:11.3px;color:#333">Round</div>
<div class="tx" style="left:1075.5px;top:434px;font-size:11.3px;color:#333">Decision</div>
<div class="tx" style="left:1026px;top:503px;font-size:11.3px;color:#333">One</div>
<div class="tx" style="left:1149.5px;top:503px;font-size:11.3px;color:#333">Two</div>
<div class="tx" style="left:1015px;top:550.5px;font-size:11.3px;color:#333">Result 1</div>
<div class="tx" style="left:1138px;top:550.5px;font-size:11.3px;color:#333">Result 2</div>
<div class="b" style="left:1101px;top:230px;width:226px;height:34px;background:rgba(234,234,234,0.9);backdrop-filter:blur(3px);border-radius:7px;box-shadow:0 1px 3px rgba(0,0,0,.2);overflow:hidden"><div class="b" style="left:200px;top:0;width:26px;height:34px;background:#dddddd"></div></div>
<svg class="a" style="left:1112px;top:239px" width="17" height="17" viewBox="0 0 17 17" fill="none" stroke="#333" stroke-width="2" stroke-linejoin="round" stroke-linecap="round" ><rect x="1.5" y="1.6" width="13.6" height="13.6" rx="1.5" stroke-width="1.9"/><path d="M1.5 3 a1.4 1.4 0 0 1 1.4 -1.4 H7.2 V15.2 H2.9 a1.4 1.4 0 0 1 -1.4 -1.4 Z" fill="#333" stroke="none"/></svg>
<svg class="a" style="left:1153px;top:238px" width="17" height="19" viewBox="0 0 17 19" fill="none" stroke="#333" stroke-width="1.9" stroke-linejoin="round" stroke-linecap="round" ><rect x="1.8" y="8.6" width="12.8" height="8.6" rx="1.4"/><path d="M4.6 8.6 V5.8 a3.6 3.6 0 0 1 7.2 0 V8.6"/></svg>
<svg class="a" style="left:1192px;top:238px" width="19" height="19" viewBox="0 0 19 19" fill="none" stroke="#333" stroke-width="1.9" stroke-linejoin="round" stroke-linecap="round" ><rect x="1.6" y="6.6" width="10.4" height="10.4" rx="1.4"/><path d="M6.6 6.6 V3 a1.4 1.4 0 0 1 1.4 -1.4 H16 a1.4 1.4 0 0 1 1.4 1.4 V10.6 a1.4 1.4 0 0 1 -1.4 1.4 H12"/></svg>
<svg class="a" style="left:1233px;top:238px" width="16" height="19" viewBox="0 0 16 19" fill="none" stroke="#333" stroke-width="0" stroke-linejoin="round" stroke-linecap="round" ><path d="M2.2 1 H9.2 L15 6.8 V16.6 a1.4 1.4 0 0 1 -1.4 1.4 H2.2 a1.4 1.4 0 0 1 -1.4 -1.4 V2.4 a1.4 1.4 0 0 1 1.4 -1.4 Z" fill="#333" stroke="none"/><path d="M9.2 1.5 V6.8 H14.5" fill="#eaeaea" stroke="none"/><path d="M3 15.5 L6.3 11.3 L8.3 13.5 L10.3 11.8 L13 15.5 Z" fill="#eaeaea" stroke="none"/><circle cx="5" cy="9.5" r="1.3" fill="#eaeaea" stroke="none"/></svg>
<svg class="a" style="left:1273px;top:238px" width="16" height="19" viewBox="0 0 16 19" fill="none" stroke="#333" stroke-width="0" stroke-linejoin="round" stroke-linecap="round" ><path d="M2.2 1 H9.2 L15 6.8 V16.6 a1.4 1.4 0 0 1 -1.4 1.4 H2.2 a1.4 1.4 0 0 1 -1.4 -1.4 V2.4 a1.4 1.4 0 0 1 1.4 -1.4 Z" fill="#333" stroke="none"/><path d="M9.2 1.5 V6.8 H14.5" fill="#eaeaea" stroke="none"/></svg>
<div class="tx" style="left:1275.6px;top:249px;font-size:5px;font-weight:bold;color:#eaeaea">PNG</div>
<svg class="a" style="left:1306px;top:241px" width="15" height="13" viewBox="0 0 15 13" fill="none" stroke="#888" stroke-width="1.5" stroke-linejoin="round" stroke-linecap="round" stroke-linecap="butt" stroke-linejoin="miter"><path d="M3 2 L7.2 6.3 L3 10.6 M8 2 L12.2 6.3 L8 10.6"/></svg>
<svg class="a" style="left:1228.9px;top:546.3px" width="20.3" height="20.3" viewBox="0 0 24 24" fill="#111"><path d="M10 18a7.952 7.952 0 0 0 4.897-1.688l4.396 4.396 1.414-1.414-4.396-4.396A7.952 7.952 0 0 0 18 10c0-4.411-3.589-8-8-8s-8 3.589-8 8 3.589 8 8 8zm0-14c3.309 0 6 2.691 6 6s-2.691 6-6 6-6-2.691-6-6 2.691-6 6-6z"/><path d="M11 6H9v3H6v2h3v3h2v-3h3V9h-3z"/></svg>
<svg class="a" style="left:1265.1px;top:546.3px" width="20.3" height="20.3" viewBox="0 0 24 24" fill="#111"><path d="M10 18a7.952 7.952 0 0 0 4.897-1.688l4.396 4.396 1.414-1.414-4.396-4.396A7.952 7.952 0 0 0 18 10c0-4.411-3.589-8-8-8s-8 3.589-8 8 3.589 8 8 8zm0-14c3.309 0 6 2.691 6 6s-2.691 6-6 6-6-2.691-6-6 2.691-6 6-6z"/><path d="M6 9h8v2H6z"/></svg>
<svg class="a" style="left:1300.9px;top:546px" width="20.8" height="20.8" viewBox="0 0 24 24" fill="#111"><path d="M19 7c0-1.103-.897-2-2-2H7V2H5v3H2v2h15v15h2v-3h3v-2h-3V7z"/><path d="M5 17c0 1.103.897 2 2 2h8v-2H7V9H5v8z"/></svg>
<div class="b" style="left:858px;top:586px;width:479px;height:2px;background:#e0e0e0"></div>
<div class="tx" style="left:875px;top:598.2px;font-family:'Liberation Mono',monospace;font-size:16px;color:#999">1</div>
<div class="tx" style="left:891.5px;top:598.1px;font-family:'Liberation Mono',monospace;white-space:pre;font-size:20.8px;transform:scaleX(0.923);transform-origin:0 0;color:#111">graph TD</div>
<div class="tx" style="left:875px;top:627.0px;font-family:'Liberation Mono',monospace;font-size:16px;color:#999">2</div>
<div class="tx" style="left:891.5px;top:626.9px;font-family:'Liberation Mono',monospace;white-space:pre;font-size:20.8px;transform:scaleX(0.923);transform-origin:0 0;color:#111">A[Hard]    |Text| B(Round)</div>
<svg class="a" style="left:983.7px;top:629.6px" width="36" height="10" viewBox="0 0 36 10" fill="none" stroke="#111" stroke-width="1.6" stroke-linejoin="round" stroke-linecap="round" stroke-linecap="butt" stroke-linejoin="miter"><path d="M2 5.5 H33"/><path d="M27.5 1 L33.2 5.5 L27.5 10"/></svg>
<div class="tx" style="left:875px;top:655.8px;font-family:'Liberation Mono',monospace;font-size:16px;color:#999">3</div>
<div class="tx" style="left:891.5px;top:655.7px;font-family:'Liberation Mono',monospace;white-space:pre;font-size:20.8px;transform:scaleX(0.923);transform-origin:0 0;color:#111">B     C{Decision}</div>
<svg class="a" style="left:914.5px;top:658.4px" width="36" height="10" viewBox="0 0 36 10" fill="none" stroke="#111" stroke-width="1.6" stroke-linejoin="round" stroke-linecap="round" stroke-linecap="butt" stroke-linejoin="miter"><path d="M2 5.5 H33"/><path d="M27.5 1 L33.2 5.5 L27.5 10"/></svg>
<div class="tx" style="left:875px;top:684.6px;font-family:'Liberation Mono',monospace;font-size:16px;color:#999">4</div>
<div class="tx" style="left:891.5px;top:684.5px;font-family:'Liberation Mono',monospace;white-space:pre;font-size:20.8px;transform:scaleX(0.923);transform-origin:0 0;color:#111">C    |One| D[Result 1]</div>
<svg class="a" style="left:914.5px;top:687.2px" width="36" height="10" viewBox="0 0 36 10" fill="none" stroke="#111" stroke-width="1.6" stroke-linejoin="round" stroke-linecap="round" stroke-linecap="butt" stroke-linejoin="miter"><path d="M2 5.5 H33"/><path d="M27.5 1 L33.2 5.5 L27.5 10"/></svg>
<div class="tx" style="left:875px;top:713.4px;font-family:'Liberation Mono',monospace;font-size:16px;color:#999">5</div>
<div class="tx" style="left:891.5px;top:713.3px;font-family:'Liberation Mono',monospace;white-space:pre;font-size:20.8px;transform:scaleX(0.923);transform-origin:0 0;color:#111">C    |Two| E[Result 2]</div>
<svg class="a" style="left:914.5px;top:716.0px" width="36" height="10" viewBox="0 0 36 10" fill="none" stroke="#111" stroke-width="1.6" stroke-linejoin="round" stroke-linecap="round" stroke-linecap="butt" stroke-linejoin="miter"><path d="M2 5.5 H33"/><path d="M27.5 1 L33.2 5.5 L27.5 10"/></svg>
</div>
</body></html>
